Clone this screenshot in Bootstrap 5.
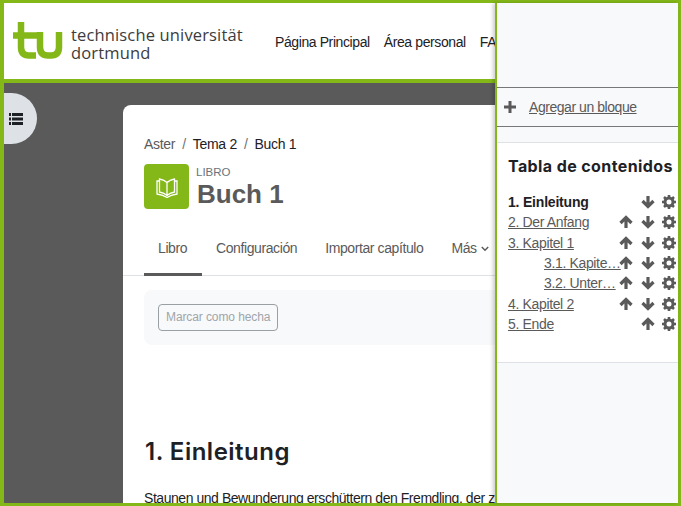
<!DOCTYPE html>
<html lang="es">
<head>
  <meta charset="UTF-8" />
  <title>Buch 1</title>
  <link href="https://cdn.jsdelivr.net/npm/bootstrap@5.3.0/dist/css/bootstrap.min.css" rel="stylesheet" />
  <style>
    html, body { height: 100%; overflow: hidden; }
    body { font-family: "Liberation Sans", Arial, sans-serif; font-size: 14px; color: #1d2125; }
    .page-frame { height: 100vh; border: solid #84b818; border-width: 3px 3px 3px 4px; background: #fff; }
    .main-col { width: 491px; flex: none; overflow: hidden; }
    .site-head { height: 80px; border-bottom: 4px solid #84b818; padding-left: 9px; flex: none; white-space: nowrap; }
    .logo-box { width: 262px; flex: none; }
    .logo-text { font-family: "Open Sans", sans-serif; font-size: 16.5px; line-height: 18.5px; color: #3c3c3c; margin-left: 8px; margin-top: 6px; letter-spacing: .15px; }
    .top-link { color: #1d2125; text-decoration: none; margin-right: 14px; margin-top: 3px; letter-spacing: -.4px; }
    .page-back { background: #5a5a5a; flex: 1; min-height: 0; }
    .side-toggle { width: 33px; height: 51px; margin-top: 10px; background: #dee2e6; border-radius: 0 26px 26px 0; flex: none; padding: 0 0 0 5px; border: 0; }
    .main-card { width: 500px; flex: none; margin: 22px 0 0 86px; background: #fff; border-radius: 8px 0 0 0; padding: 29px 0 0 0; }
    .crumbs { padding-left: 21px; height: 20px; line-height: 20px; letter-spacing: -.3px; color: #1d2125; }
    .crumbs .first { color: #5a5a5a; }
    .crumbs .sep { color: #6a737b; margin: 0 7px; }
    .mod-head { margin: 10px 0 0 21px; height: 45px; }
    .mod-icon { width: 45px; height: 45px; background: #84b818; border-radius: 4px; flex: none; }
    .mod-type { font-size: 11.5px; line-height: 12px; color: #6a737b; margin: 2px 0 0 7px; }
    .mod-title { font-size: 26px; font-weight: 700; line-height: 30px; color: #5a5a5a; margin: 1px 0 0 8px; }
    .book-tabs { margin-top: 20px; height: 47px; border-bottom: 1px solid #dee2e6; padding-left: 21px; letter-spacing: -.4px; }
    .book-tabs a { display: block; height: 47px; padding: 0 14px; line-height: 38px; color: #5a5a5a; text-decoration: none; white-space: nowrap; }
    .book-tabs a.on { border-bottom: 3px solid #5a5a5a; width: 58px; }
    .book-tabs svg { margin-left: 1px; }
    .done-box { margin: 14px 0 0 21px; height: 55px; background: #f8f9fa; border-radius: 8px 0 0 8px; padding: 14px 0 0 14px; }
    .done-btn { font-size: 12px; height: 27px; line-height: 25px; padding: 0 7px; color: #a0a5aa; border: 1px solid #9a9fa4; border-radius: 4px; background: transparent; letter-spacing: -.1px; }
    .chapter-title { font-family: Inter, sans-serif; font-size: 24px; font-weight: 600; color: #1d2125; margin: 92px 0 0 22px; line-height: 30px; letter-spacing: .5px; }
    .chapter-text { margin: 21px 0 0 21px; white-space: nowrap; letter-spacing: -.45px; }
    .drawer-col { flex: 1; min-width: 0; background: #f8f9fa; border-left: 2px solid #84b818; box-shadow: -2px 0 4px rgba(0,0,0,.2); position: relative; }
    .add-block { margin-top: 84px; height: 40px; border-top: 1px solid #777; border-bottom: 1px solid #777; padding-left: 7px; letter-spacing: -.45px; }
    .add-block a { color: #5a5a5a; margin-left: 13px; }
    .toc-block { margin-top: 15px; height: 221px; background: #fff; border-top: 1px solid #dee2e6; border-bottom: 1px solid #dee2e6; padding: 13px 0 0 11px; overflow: hidden; }
    .toc-title { font-family: Inter, sans-serif; font-size: 16px; font-weight: 700; line-height: 20px; margin: 0 0 16px; white-space: nowrap; color: #1d2125; letter-spacing: .4px; }
    .toc-row { height: 20.3px; line-height: 20px; letter-spacing: -.35px; }
    .toc-row strong { letter-spacing: -.2px; }
    .toc-name { width: 111px; flex: none; white-space: nowrap; }
    .toc-name a { color: #5a5a5a; }
    .toc-name.sub { padding-left: 36px; }
    .toc-tools { width: 54px; flex: none; }
    .toc-tools svg { width: 14px; height: 14px; display: block; }
    .toc-tools span { width: 22px; flex: none; display: block; }
    .toc-tools span:nth-child(2) { width: 21px; }
    .toc-tools span:last-child { width: 14px; }
  </style>
</head>
<body>
  <svg width="0" height="0" class="d-block">
    <defs>
      <symbol id="ico-up" viewBox="0 0 14 14"><path d="M7 13V2.500M1.500 8L7 2.500 12.500 8" fill="none" stroke="#5a5a5a" stroke-width="3.200"/></symbol>
      <symbol id="ico-down" viewBox="0 0 14 14"><path d="M7 1V11.500M1.500 6L7 11.500 12.500 6" fill="none" stroke="#5a5a5a" stroke-width="3.200"/></symbol>
      <symbol id="ico-gear" viewBox="0 0 14 14"><circle cx="7" cy="7" r="4" fill="none" stroke="#5a5a5a" stroke-width="3"/><path d="M7 0v14M0 7h14" stroke="#5a5a5a" stroke-width="2.600" stroke-dasharray="3 8"/><path d="M2 2l10 10M12 2L2 12" stroke="#5a5a5a" stroke-width="2.600" stroke-dasharray="3 8.140"/></symbol>
    </defs>
  </svg>
  <div class="page-frame d-flex">
    <div class="main-col d-flex flex-column">
      <header class="site-head d-flex align-items-center">
        <div class="logo-box d-flex align-items-center">
          <svg width="50" height="38" viewBox="0 0 50 38">
            <path d="M8 0V25Q8 33.500 16 33.500H23M0 13.500H24M27 10V25Q27 33.500 35 33.500H38Q46 33.500 46 25V10" fill="none" stroke="#84b818" stroke-width="6.500"/>
          </svg>
          <div class="logo-text">technische universität<br>dortmund</div>
        </div>
        <a class="top-link" href="#">Página Principal</a>
        <a class="top-link" href="#">Área personal</a>
        <a class="top-link" href="#">FAQ</a>
      </header>
      <div class="page-back d-flex">
        <button class="side-toggle" type="button" aria-label="Índice">
          <svg width="14" height="12" viewBox="0 0 14 12" class="d-block">
            <path d="M0 1.500h2M3 1.500h11M0 6h2M3 6h11M0 10.500h2M3 10.500h11" stroke="#1d2125" stroke-width="2.800"/>
          </svg>
        </button>
        <main class="main-card">
          <div class="crumbs"><span class="first">Aster</span><span class="sep">/</span>Tema 2<span class="sep">/</span>Buch 1</div>
          <div class="mod-head d-flex">
            <div class="mod-icon d-flex align-items-center justify-content-center">
              <svg width="22" height="22" viewBox="0 0 22 22" fill="none" stroke="#fff" stroke-width="1.300">
                <path d="M11 6.500C9 4.500 6 3.500 3.500 3V16C6 16.500 9 17.500 11 19.500C13 17.500 16 16.500 18.500 16V3C16 3.500 13 4.500 11 6.500ZM11 6.500V19.500"/>
                <path d="M3.500 5H1V18C4 18.500 8 19.500 11 21.500C14 19.500 18 18.500 21 18V5H18.500"/>
              </svg>
            </div>
            <div>
              <div class="mod-type">LIBRO</div>
              <h1 class="mod-title">Buch 1</h1>
            </div>
          </div>
          <nav class="book-tabs d-flex">
            <a class="on" href="#">Libro</a>
            <a href="#">Configuración</a>
            <a href="#">Importar capítulo</a>
            <a href="#">Más <svg width="8" height="6" viewBox="0 0 8 6"><path d="M.8 1l3.200 3.200L7.200 1" fill="none" stroke="#5a5a5a" stroke-width="1.500"/></svg></a>
          </nav>
          <div class="done-box">
            <button class="done-btn" type="button">Marcar como hecha</button>
          </div>
          <h2 class="chapter-title">1. Einleitung</h2>
          <p class="chapter-text">Staunen und Bewunderung erschüttern den Fremdling, der zum ersten Mal</p>
        </main>
      </div>
    </div>
    <aside class="drawer-col">
      <div class="add-block d-flex align-items-center">
        <svg width="12" height="12" viewBox="0 0 12 12"><path d="M6 0v12M0 6h12" stroke="#5a5a5a" stroke-width="3"/></svg>
        <a href="#">Agregar un bloque</a>
      </div>
      <section class="toc-block">
        <h5 class="toc-title">Tabla de contenidos</h5>
        <div id="tocList"></div>
      </section>
    </aside>
  </div>
  <script>
    const chapters = [
      { name: "1. Einleitung", current: true, up: false, down: true },
      { name: "2. Der Anfang", up: true, down: true },
      { name: "3. Kapitel 1", up: true, down: true },
      { name: "3.1. Kapite…", sub: true, up: true, down: true },
      { name: "3.2. Unter…", sub: true, up: true, down: true },
      { name: "4. Kapitel 2", up: true, down: true },
      { name: "5. Ende", up: true, down: false, lastRow: true }
    ];

    function icon(id) {
      return `<svg><use href="#ico-${id}"/></svg>`;
    }

    const rows = chapters.map(ch => {
      const label = ch.current ? `<strong>${ch.name}</strong>` : `<a href="#">${ch.name}</a>`;
      // Ende has only an up arrow, and it sits where the down arrows are
      const first = ch.lastRow ? "" : (ch.up ? icon("up") : "");
      const second = ch.lastRow ? icon("up") : (ch.down ? icon("down") : "");
      return `
        <div class="toc-row d-flex align-items-center">
          <div class="toc-name ${ch.sub ? "sub" : ""}">${label}</div>
          <div class="toc-tools d-flex">
            <span>${first}</span><span>${second}</span><span>${icon("gear")}</span>
          </div>
        </div>`;
    });
    document.getElementById("tocList").innerHTML = rows.join("");
  </script>
  <script src="https://cdn.jsdelivr.net/npm/bootstrap@5.3.0/dist/js/bootstrap.bundle.min.js"></script>
</body>
</html>
